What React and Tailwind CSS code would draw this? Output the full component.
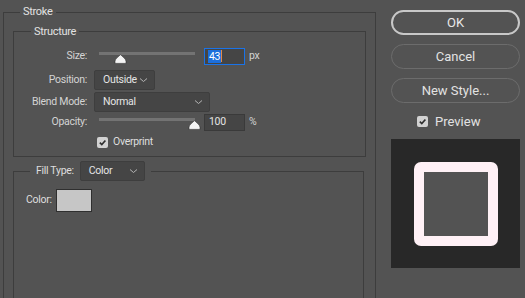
import React from 'react';

const font = { fontFamily: 'Roboto, "Noto Sans", sans-serif' };

function Chevron() {
  return (
    <svg width="9" height="6" viewBox="0 0 9 6" className="shrink-0">
      <path d="M1 1.5 L4.5 4.5 L8 1.5" fill="none" stroke="#b4b4b4" strokeWidth="1" />
    </svg>
  );
}

function Select({ value, className }) {
  return (
    <div
      className={
        'flex h-[20px] items-center justify-between rounded-[2px] border border-[#3e3e3e] bg-[#454545] pl-[8px] pr-[6px] text-[#e4e4e4] ' +
        className
      }
    >
      <span>{value}</span>
      <Chevron />
    </div>
  );
}

function Check() {
  return (
    <div className="flex h-[11px] w-[11px] items-center justify-center rounded-[2px] bg-[#d2d2d2]">
      <svg width="9" height="9" viewBox="0 0 9 9">
        <path d="M1.8 4.6 L3.8 6.6 L7.4 2.4" fill="none" stroke="#2e2e2e" strokeWidth="1.6" />
      </svg>
    </div>
  );
}

function Thumb() {
  return (
    <svg width="13" height="10" viewBox="0 0 13 10">
      <path
        d="M6.5 0.6 C7.6 2.2 12 4.6 12 7.2 V9.4 H1 V7.2 C1 4.6 5.4 2.2 6.5 0.6 Z"
        fill="#f4f4f4"
        stroke="#2a2a2a"
        strokeWidth="0.6"
      />
    </svg>
  );
}

function Slider({ at }) {
  return (
    <div className="relative h-full w-[96px]">
      <div className="absolute left-0 right-0 top-[5px] h-[3px] bg-[#737373]" />
      <div className="absolute top-[7px]" style={{ left: at - 6 }}>
        <Thumb />
      </div>
    </div>
  );
}

function Label({ children }) {
  return <div className="w-[73px] shrink-0 text-right text-[#d4d4d4]">{children}</div>;
}

export default function App() {
  return (
    <div
      className="flex h-[298px] w-[525px] overflow-hidden bg-[#535353] text-[10.5px] leading-none tracking-[-0.3px] text-[#d8d8d8]"
      style={font}
    >
      {/* left: Stroke group */}
      <fieldset className="ml-[3px] mt-[4px] h-[320px] w-[373px] shrink-0 border border-[#3d3d3d] px-[9px]">
        <legend className="ml-[7px] h-[16px] px-[3px] text-[11px] leading-[16px] text-[#e2e2e2]">Stroke</legend>

        <fieldset className="mt-[3px] w-[353px] border border-[#3d3d3d] pb-[8px]">
          <legend className="ml-[17px] h-[17px] px-[3px] text-[11px] leading-[17px] text-[#e2e2e2]">Structure</legend>

          <div className="mt-[7px] flex h-[18px] items-center">
            <Label>Size:</Label>
            <div className="ml-[12px] h-full">
              <Slider at={21} />
            </div>
            <div className="ml-[9px] flex h-[17px] w-[41px] items-center border border-[#1a73e8] bg-[#454545] pl-[3px]">
              <span className="bg-[#1d6fdc] px-[1px] leading-[13px] text-white">43</span>
              <span className="h-[12px] w-[1px] bg-[#e08a4a]" />
            </div>
            <span className="ml-[4px] text-[#d4d4d4]">px</span>
          </div>

          <div className="mt-[5px] flex items-center">
            <Label>Position:</Label>
            <Select value="Outside" className="ml-[7px] w-[61px]" />
          </div>

          <div className="mt-[2px] flex items-center">
            <Label>Blend Mode:</Label>
            <Select value="Normal" className="ml-[7px] w-[116px]" />
          </div>

          <div className="mt-[1px] flex h-[19px] items-center">
            <Label>Opacity:</Label>
            <div className="ml-[12px] h-full">
              <Slider at={95} />
            </div>
            <div className="ml-[9px] flex h-[17px] w-[41px] items-center border border-[#3a3a3a] bg-[#454545] pl-[4px] text-[#e4e4e4]">
              100
            </div>
            <span className="ml-[4px] text-[#d4d4d4]">%</span>
          </div>

          <div className="mt-[4px] flex h-[12px] items-center pl-[83px]">
            <Check />
            <span className="ml-[5px] text-[#dedede]">Overprint</span>
          </div>
        </fieldset>

        <fieldset className="mt-[4px] h-[150px] w-[351px] border border-[#3d3d3d]">
          <legend className="ml-[16px] px-[6px]">
            <div className="flex h-[20px] items-center">
              <span className="text-[#dedede]">Fill Type:</span>
              <Select value="Color" className="ml-[6px] w-[65px]" />
            </div>
          </legend>
          <div className="mt-[8px] flex items-center pl-[12px]">
            <span className="text-[#dedede]">Color:</span>
            <div className="ml-[4px] h-[23px] w-[36px] border border-[#2f2f2f] bg-[#c6c6c6]" />
          </div>
        </fieldset>
      </fieldset>

      {/* right: buttons + preview */}
      <div className="ml-[15px] flex w-[129px] shrink-0 flex-col pt-[10px] tracking-normal">
        <button className="flex h-[25px] items-center justify-center rounded-full border-2 border-[#c8c8c8] text-[13px] text-[#e8e8e8]">
          OK
        </button>
        <button className="mt-[9px] flex h-[25px] items-center justify-center rounded-full border-[1.5px] border-[#6c6c6c] text-[13px] text-[#e2e2e2]">
          Cancel
        </button>
        <button className="mt-[9px] flex h-[25px] items-center justify-center rounded-full border-[1.5px] border-[#6c6c6c] text-[13px] text-[#e2e2e2]">
          New Style...
        </button>
        <div className="mt-[12px] flex h-[12px] items-center pl-[26px]">
          <Check />
          <span className="ml-[7px] text-[13px] text-[#e2e2e2]">Preview</span>
        </div>
        <div className="mt-[12px] flex h-[129px] w-[129px] items-center justify-center bg-[#282828]">
          <div className="flex h-[84px] w-[84px] items-center justify-center rounded-[7px] bg-[#fff1f6]">
            <div className="h-[64px] w-[64px] bg-[#535353]" />
          </div>
        </div>
      </div>
    </div>
  );
}
